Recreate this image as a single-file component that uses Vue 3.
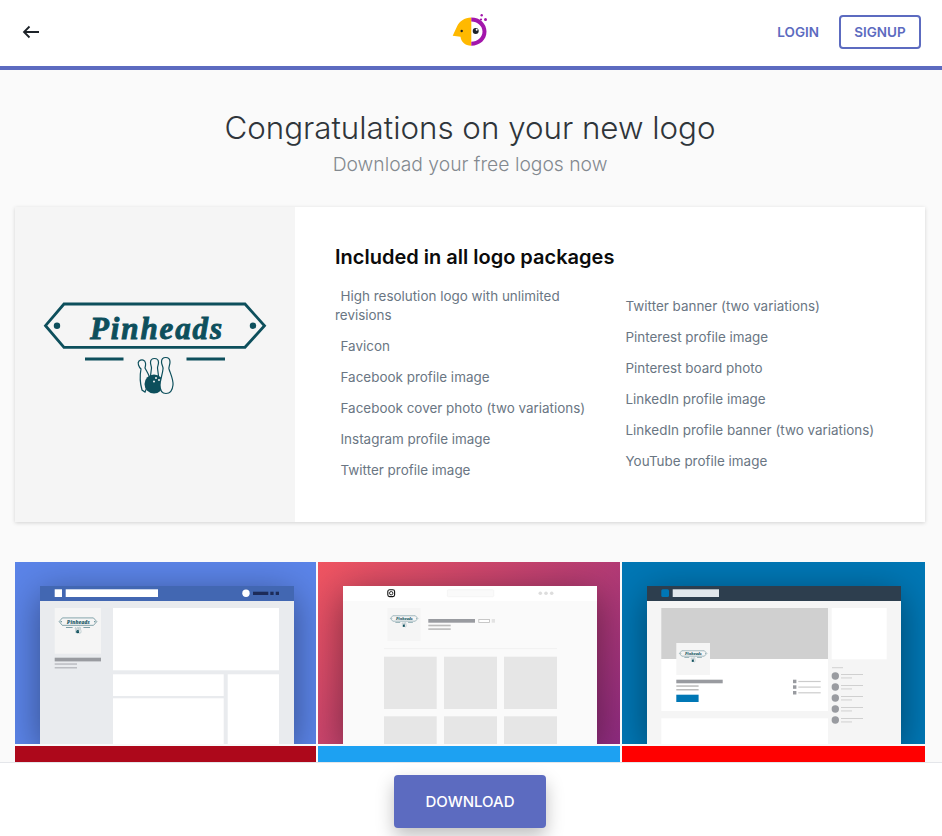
<template>
  <div class="page">
    <header class="topbar">
      <svg class="back" width="18" height="14" viewBox="0 0 18 14">
        <path d="M17 7 H2 M7.500 1.500 L2 7 L7.500 12.500" fill="none" stroke="#1d2329" stroke-width="1.800" />
      </svg>
      <svg class="brand" width="38" height="36" viewBox="0 0 38 36">
        <path d="M20.300 4.400 C13.500 4.400 8 8.500 6 13.500 L1.700 22.800 L9.500 23.800 C10 28.500 14 32.800 20.300 32.800 Z" fill="#ffb900" />
        <path d="M20.300 4.400 C29 4.400 35.500 10.500 35.500 18.600 C35.500 26.700 29 32.800 20.300 32.800 L20.300 28.800 C26.500 28.800 31.500 24.500 31.500 18.600 C31.500 12.700 26.500 8.400 20.300 8.400 Z" fill="#a316ab" />
        <circle cx="10.700" cy="18" r="1.200" fill="#222" />
        <circle cx="24.700" cy="18" r="3" fill="#1d2329" />
        <circle cx="25.700" cy="16.800" r="1" fill="#fff" />
        <circle cx="30.700" cy="2.300" r="1.200" fill="#a316ab" />
        <circle cx="34.500" cy="6.500" r="1.500" fill="#a316ab" />
        <circle cx="30" cy="6.500" r="1.100" fill="#a316ab" />
      </svg>
      <nav class="auth">
        <a class="login">LOGIN</a>
        <a class="signup">SIGNUP</a>
      </nav>
    </header>

    <main class="content">
      <h1>Congratulations on your new logo</h1>
      <p class="sub">Download your free logos now</p>

      <section class="card">
        <div class="logo-panel">
          <svg width="250" height="110" viewBox="0 0 250 110">
            <g id="pinheads">
              <path d="M34 14 L215 14 L234.500 35.700 L215 57.300 L34 57.300 L15.500 35.700 Z" fill="none" stroke="#0d4f5c" stroke-width="2.800" />
              <circle cx="27" cy="35.700" r="3.200" fill="#0d4f5c" />
              <circle cx="223" cy="35.700" r="3.200" fill="#0d4f5c" />
              <text x="60" y="49" font-family="Liberation Serif, serif" font-size="31" font-weight="700" font-style="italic" fill="#0d4f5c" stroke="#0d4f5c" stroke-width="0.900" textLength="132" lengthAdjust="spacing">Pinheads</text>
              <rect x="55" y="67.500" width="38.500" height="3" fill="#0d4f5c" />
              <rect x="156.500" y="67.500" width="38.500" height="3" fill="#0d4f5c" />
              <g fill="#f5f5f5" stroke="#0d4f5c" stroke-width="1.200">
                <path d="M109 71 C112 69 115 70 115.500 73 C116 76 115 77 115 78 C117 82 120 86 120 90 L115 102 L112 100 C110 93 110 84 111 79 C109 77 107 73 109 71 Z" />
                <path d="M124.500 68.500 C127 68.500 128.500 70 128.500 72.500 C128.500 75 127.500 76 127.500 78 L129 90 L120 90 L121.500 78 C121.500 76 120.500 75 120.500 72.500 C120.500 70 122 68.500 124.500 68.500 Z" />
              </g>
              <circle cx="124" cy="94" r="9.500" fill="#0d4f5c" />
              <circle cx="126" cy="88" r="1" fill="#f5f5f5" />
              <circle cx="129" cy="90" r="1" fill="#f5f5f5" />
              <circle cx="124" cy="91.500" r="1" fill="#f5f5f5" />
              <path d="M135.700 67.500 C138.500 67.500 140 69.500 140 72 C140 75 138.500 77 139 79 C141 85 143.500 90 143 95 C142.500 100 141 103.500 136 103.500 C131 103.500 130 100 130 95 C130 90 132.500 85 133 79 C133.500 77 131.500 75 131.500 72 C131.500 69.500 133 67.500 135.700 67.500 Z" fill="#f5f5f5" stroke="#0d4f5c" stroke-width="1.200" />
            </g>
          </svg>
        </div>
        <div class="included">
          <h2>Included in all logo packages</h2>
          <div class="columns">
            <ul>
              <li v-for="item in leftItems" :key="item">{{ item }}</li>
            </ul>
            <ul>
              <li v-for="item in rightItems" :key="item">{{ item }}</li>
            </ul>
          </div>
        </div>
      </section>

      <section class="thumbs">
        <div class="thumb facebook">
          <div class="mock">
            <svg viewBox="0 0 254 158" width="254" height="158">
              <rect width="254" height="158" fill="#e9ebee" />
              <rect width="254" height="15" fill="#4267b2" />
              <rect x="14.700" y="3.300" width="7.300" height="7.700" fill="#fff" />
              <rect x="25.700" y="3.300" width="92.300" height="7.700" fill="#fff" />
              <circle cx="206" cy="7.300" r="3.700" fill="#fff" />
              <rect x="213" y="5.700" width="15.300" height="3.300" fill="#1c2b59" />
              <rect x="230.300" y="5.700" width="3.300" height="3.300" fill="#1c2b59" />
              <rect x="235.700" y="5.700" width="3.300" height="3.300" fill="#1c2b59" />
              <rect x="14.700" y="22" width="46.300" height="45.700" fill="#f5f5f5" />
              <use href="#pinheads" transform="translate(16.500 29.500) scale(0.172)" />
              <rect x="14.700" y="71.700" width="46.300" height="3.700" fill="#999ba0" />
              <rect x="14.700" y="77.300" width="22.300" height="1.500" fill="#bbbdc2" />
              <rect x="14.700" y="81" width="22.300" height="1.500" fill="#bbbdc2" />
              <rect x="73" y="22" width="166" height="62.300" fill="#fff" />
              <rect x="73" y="88.300" width="110.700" height="21.700" fill="#fff" />
              <rect x="73" y="112.300" width="110.700" height="46" fill="#fff" />
              <rect x="187.700" y="88.300" width="51.300" height="70" fill="#fff" />
            </svg>
          </div>
        </div>
        <div class="thumb instagram">
          <div class="mock">
            <svg viewBox="0 0 254 158" width="254" height="158">
              <rect width="254" height="158" fill="#fafafa" />
              <rect width="254" height="15" fill="#fff" />
              <rect x="44.800" y="3.800" width="6.800" height="6.800" rx="1.800" fill="none" stroke="#111" stroke-width="1.100" />
              <circle cx="48.200" cy="7.200" r="1.700" fill="none" stroke="#111" stroke-width="0.900" />
              <rect x="104.300" y="3.700" width="46.400" height="7" rx="1" fill="#fafafa" stroke="#f0f0f0" stroke-width="0.600" />
              <circle v-for="x in [197.300, 203, 208.700]" :key="x" :cx="x" cy="7.300" r="1.800" fill="#ddd" />
              <rect x="44.300" y="22" width="33.400" height="33" fill="#f5f5f5" />
              <use href="#pinheads" transform="translate(45.500 28) scale(0.125)" />
              <rect x="85.300" y="33" width="46.700" height="3.700" fill="#999ba0" />
              <rect x="135.800" y="33.500" width="10.700" height="3" fill="#fff" stroke="#bbb" stroke-width="0.800" />
              <rect x="148.700" y="33" width="3.300" height="3.700" fill="#e3e3e3" />
              <rect x="85.300" y="38.700" width="22.400" height="1.600" fill="#bbb" />
              <rect x="85.300" y="42.300" width="22.400" height="1.600" fill="#bbb" />
              <rect x="41" y="62.300" width="173" height="0.800" fill="#eee" />
              <rect x="41" y="70.700" width="52.700" height="52.300" fill="#e6e6e6" />
              <rect x="101" y="70.700" width="53" height="52.300" fill="#e6e6e6" />
              <rect x="161" y="70.700" width="53" height="52.300" fill="#e6e6e6" />
              <rect x="41" y="130.300" width="52.700" height="28" fill="#e6e6e6" />
              <rect x="101" y="130.300" width="53" height="28" fill="#e6e6e6" />
              <rect x="161" y="130.300" width="53" height="28" fill="#e6e6e6" />
            </svg>
          </div>
        </div>
        <div class="thumb linkedin">
          <div class="mock">
            <svg viewBox="0 0 254 158" width="254" height="158">
              <rect width="254" height="158" fill="#f5f5f5" />
              <rect width="254" height="15" fill="#2d3e4e" />
              <rect x="14.300" y="3.300" width="7.700" height="7.700" rx="1.500" fill="#0077b5" />
              <rect x="25.700" y="3.300" width="46.300" height="7.700" fill="#e1e7ec" />
              <rect x="14.300" y="22" width="166.700" height="51" fill="#d0d0d0" />
              <rect x="184.700" y="22" width="55" height="51.300" fill="#fff" />
              <rect x="14.300" y="73" width="166.700" height="52" fill="#fff" />
              <rect x="29.300" y="57" width="33.700" height="32" fill="#f5f5f5" />
              <use href="#pinheads" transform="translate(30.500 63) scale(0.125)" />
              <rect x="29.300" y="93.700" width="46.400" height="3.600" fill="#999ba0" />
              <rect x="29.300" y="99.300" width="22.300" height="1.500" fill="#bbb" />
              <rect x="29.300" y="103" width="22.300" height="1.500" fill="#bbb" />
              <rect x="29.300" y="108.700" width="22.300" height="7.300" fill="#0077b5" />
              <g v-for="y in [93.700, 99.300, 105]" :key="y">
                <rect x="146" :y="y" width="3.400" height="3.500" fill="#999ba0" />
                <rect x="151.300" :y="y + 1.200" width="22.400" height="1.200" fill="#ccc" />
              </g>
              <rect x="185" y="81.300" width="11" height="0.900" fill="#ccc" />
              <g v-for="y in [90, 101, 112, 123, 134]" :key="y">
                <circle cx="188.300" :cy="y" r="3.700" fill="#999ba0" />
                <rect x="194" :y="y - 2" width="22" height="0.900" fill="#ccc" />
                <rect x="194" :y="y + 1.500" width="11" height="0.900" fill="#ccc" />
              </g>
              <rect x="14.300" y="132.300" width="166.700" height="26" fill="#fff" />
            </svg>
          </div>
        </div>
        <div class="thumb pinterest"></div>
        <div class="thumb twitter"></div>
        <div class="thumb youtube"></div>
      </section>
    </main>

    <footer class="actions">
      <button class="download">DOWNLOAD</button>
    </footer>
  </div>
</template>

<script setup>
const leftItems = [
  'High resolution logo with unlimited revisions',
  'Favicon',
  'Facebook profile image',
  'Facebook cover photo (two variations)',
  'Instagram profile image',
  'Twitter profile image'
];

const rightItems = [
  'Twitter banner (two variations)',
  'Pinterest profile image',
  'Pinterest board photo',
  'LinkedIn profile image',
  'LinkedIn profile banner (two variations)',
  'YouTube profile image'
];
</script>

<style>
body {
  margin: 0;
  background: #fafafa;
}
</style>

<style scoped>
.page {
  display: flex;
  flex-direction: column;
  height: 836px;
  overflow: hidden;
  font-family: Inter, "Noto Sans", sans-serif;
}
.topbar {
  flex: none;
  display: flex;
  align-items: center;
  justify-content: space-between;
  position: relative;
  box-sizing: border-box;
  height: 70px;
  padding: 0 21px 3px 22px;
  background: #fff;
  border-bottom: 4px solid #5c6bc0;
}
.back {
  display: block;
}
.brand {
  position: absolute;
  left: 451px;
  top: 13px;
}
.auth {
  display: flex;
  align-items: center;
  gap: 20px;
}
.login,
.signup {
  font-size: 13.500px;
  font-weight: 600;
  color: #5c6bc0;
}
.signup {
  display: flex;
  align-items: center;
  justify-content: center;
  box-sizing: border-box;
  width: 82px;
  height: 34px;
  border: 2px solid #5c6bc0;
  border-radius: 4px;
}
.content {
  flex: 1;
  min-height: 0;
  overflow: hidden;
  padding: 0 17px 0 15px;
}
h1 {
  margin: 38px 0 0;
  font-size: 31.300px;
  line-height: 40px;
  font-weight: 300;
  color: #2f353a;
  text-align: center;
}
.sub {
  margin: 3px 0 0;
  font-size: 19.300px;
  line-height: 26px;
  font-weight: 300;
  color: #83898f;
  text-align: center;
}
.card {
  display: flex;
  height: 315px;
  margin-top: 30px;
  background: #fff;
  box-shadow: 0 1px 4px rgba(0, 0, 0, 0.16);
}
.logo-panel {
  flex: none;
  display: flex;
  align-items: center;
  justify-content: center;
  box-sizing: border-box;
  width: 280px;
  padding-bottom: 39px;
  background: #f5f5f5;
}
.logo-panel svg {
  display: block;
}
.included {
  flex: 1;
  padding: 37px 20px 0 40px;
}
h2 {
  margin: 0;
  font-size: 20px;
  line-height: 26px;
  font-weight: 600;
  color: #0b0b0b;
}
.columns {
  display: flex;
  align-items: center;
  margin-top: 5px;
}
ul {
  margin: 0;
  padding: 0;
  list-style: none;
}
ul:first-child {
  width: 285px;
  flex: none;
  padding-right: 15px;
  box-sizing: border-box;
}
li {
  margin: 12px 0;
  font-size: 13.450px;
  line-height: 19px;
  color: #6a7683;
  text-indent: 5.500px;
}
.thumbs {
  display: grid;
  grid-template-columns: 301px 302px 303px;
  grid-auto-rows: 182px;
  gap: 2px;
  margin-top: 40px;
}
.thumb {
  display: flex;
  justify-content: center;
  align-items: flex-start;
  overflow: hidden;
  padding-top: 24px;
  box-sizing: border-box;
}
.mock {
  width: 254px;
  height: 158px;
  box-shadow: 0 8px 36px rgba(0, 0, 0, 0.42);
}
.mock svg {
  display: block;
}
.facebook {
  padding-left: 2px;
  background: #5b84e8;
}
.instagram {
  padding-left: 2px;
  background: linear-gradient(135deg, #f05561, #8e2b80);
}
.linkedin {
  background: #0077b5;
}
.pinterest {
  background: #ad081b;
}
.twitter {
  background: #1da1f2;
}
.youtube {
  background: #ff0000;
}
.actions {
  flex: none;
  display: flex;
  justify-content: center;
  box-sizing: border-box;
  height: 74px;
  padding: 12px 2px 0 0;
  background: #fff;
  border-top: 1px solid #e4e6ea;
}
.download {
  width: 152px;
  height: 53px;
  border: none;
  border-radius: 4px;
  background: #5c6bc0;
  color: #fff;
  font-family: inherit;
  font-size: 15px;
  font-weight: 500;
  box-shadow: 0 8px 18px rgba(0, 0, 0, 0.25);
}
</style>
